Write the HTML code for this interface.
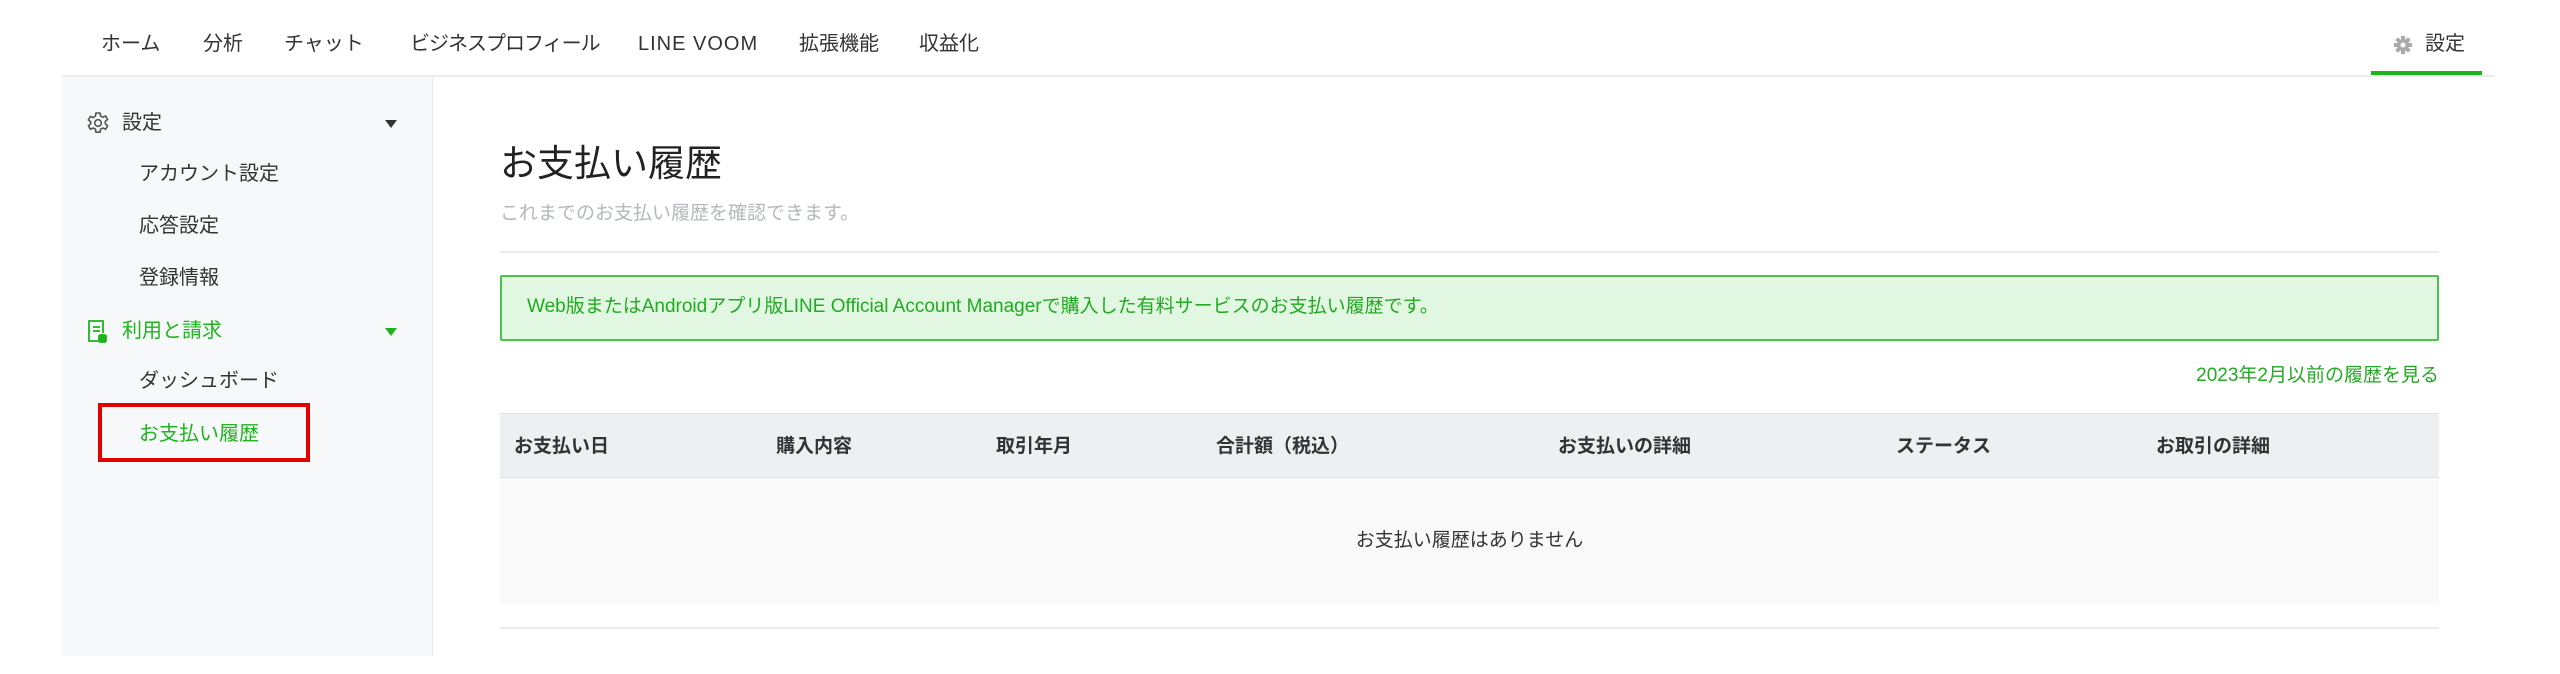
<!DOCTYPE html>
<html><head><meta charset="utf-8"><style>
*{margin:0;padding:0;box-sizing:border-box}
body{width:2560px;height:674px;background:#fff;font-family:"Liberation Sans","Noto Sans CJK JP",sans-serif;color:#333;position:relative;overflow:hidden}
.a{position:absolute;white-space:nowrap;line-height:1}
.nav{font-size:20px;color:#333;top:34px}
.side{position:absolute;left:62px;top:77px;width:371px;height:579px;background:#f7f8fa;border-right:1px solid #e8e9eb}
.si{font-size:20px;color:#333}
.th{font-size:19px;font-weight:bold;color:#333;top:437px}
</style></head><body>
<div class="a nav" style="left:101px">ホーム</div>
<div class="a nav" style="left:203px">分析</div>
<div class="a nav" style="left:284px">チャット</div>
<div class="a nav" style="left:410px;letter-spacing:-1px">ビジネスプロフィール</div>
<div class="a nav" style="left:638px;letter-spacing:1px">LINE VOOM</div>
<div class="a nav" style="left:799px">拡張機能</div>
<div class="a nav" style="left:919px">収益化</div>
<svg class="a" style="left:2393px;top:35px" width="20" height="20" viewBox="0 0 20 20"><g fill="#aaa"><circle cx="10" cy="10" r="6"/><rect x="8" y="1" width="4" height="18"/><rect x="1" y="8" width="18" height="4"/><rect x="8" y="1" width="4" height="18" transform="rotate(45 10 10)"/><rect x="8" y="1" width="4" height="18" transform="rotate(-45 10 10)"/></g><circle cx="10" cy="10" r="2.5" fill="#fff"/></svg>
<div class="a nav" style="left:2425px">設定</div>
<div style="position:absolute;left:62px;top:75px;width:2433px;height:2px;background:#ececec"></div>
<div style="position:absolute;left:2371px;top:71px;width:111px;height:4px;background:#1db41d"></div>
<div class="side"></div>
<svg class="a" style="left:86px;top:111px" width="24" height="24" viewBox="0 0 24 24" fill="none" stroke="#555" stroke-width="1.6"><path d="M10 2h4l.6 3 2.2 1.2 2.8-1.2 2 3.4-2.3 2v2.4l2.3 2-2 3.4-2.8-1.2-2.2 1.2-.6 3h-4l-.6-3-2.2-1.2-2.8 1.2-2-3.4 2.3-2V10.8l-2.3-2 2-3.4 2.8 1.2L9.4 5z"/><circle cx="12" cy="12" r="3.3"/></svg>
<div class="a si" style="left:122px;top:113px">設定</div>
<svg class="a" style="left:384px;top:119px" width="14" height="10"><path d="M1 1h12L7 9z" fill="#333"/></svg>
<div class="a si" style="left:139px;top:164px">アカウント設定</div>
<div class="a si" style="left:139px;top:216px">応答設定</div>
<div class="a si" style="left:139px;top:268px">登録情報</div>
<svg class="a" style="left:86px;top:318px" width="22" height="26" viewBox="0 0 22 26" fill="none" stroke="#1db41d" stroke-width="1.8"><path d="M14 23H3V3h14v12"/><path d="M7 9h7M7 13h7"/><rect x="13" y="17" width="7" height="7" rx="1.5" fill="#1db41d"/></svg>
<div class="a si" style="left:122px;top:321px;color:#1db41d">利用と請求</div>
<svg class="a" style="left:384px;top:327px" width="14" height="10"><path d="M1 1h12L7 9z" fill="#1db41d"/></svg>
<div class="a si" style="left:139px;top:371px">ダッシュボード</div>
<div style="position:absolute;left:98px;top:403px;width:212px;height:59px;border:4px solid #e30000"></div>
<div class="a si" style="left:139px;top:424px;color:#1db41d">お支払い履歴</div>
<div class="a" style="left:500px;top:145px;font-size:37px;color:#222">お支払い履歴</div>
<div class="a" style="left:500px;top:204px;font-size:19px;color:#b4b8bd">これまでのお支払い履歴を確認できます。</div>
<div style="position:absolute;left:500px;top:251px;width:1939px;height:2px;background:#ececec"></div>
<div style="position:absolute;left:500px;top:275px;width:1939px;height:66px;background:#e1f7e1;border:2px solid #4cc34c;border-radius:2px"></div>
<div class="a" style="left:527px;top:297px;font-size:19px;color:#22aa22">Web版またはAndroidアプリ版LINE Official Account Managerで購入した有料サービスのお支払い履歴です。</div>
<div class="a" style="right:121px;top:366px;font-size:19px;color:#22aa22">2023年2月以前の履歴を見る</div>
<div style="position:absolute;left:500px;top:413px;width:1939px;height:65px;background:#eeeff1;border-top:1px solid #e2e3e5;border-bottom:1px solid #e2e3e5"></div>
<div class="a th" style="left:514px">お支払い日</div>
<div class="a th" style="left:776px">購入内容</div>
<div class="a th" style="left:996px">取引年月</div>
<div class="a th" style="left:1216px">合計額（税込）</div>
<div class="a th" style="left:1558px">お支払いの詳細</div>
<div class="a th" style="left:1896px">ステータス</div>
<div class="a th" style="left:2156px">お取引の詳細</div>
<div style="position:absolute;left:500px;top:478px;width:1939px;height:127px;background:#f9f9f9"></div>
<div class="a" style="left:500px;width:1939px;text-align:center;top:531px;font-size:19px;color:#333">お支払い履歴はありません</div>
<div style="position:absolute;left:500px;top:627px;width:1939px;height:2px;background:#ececec"></div>
</body></html>
